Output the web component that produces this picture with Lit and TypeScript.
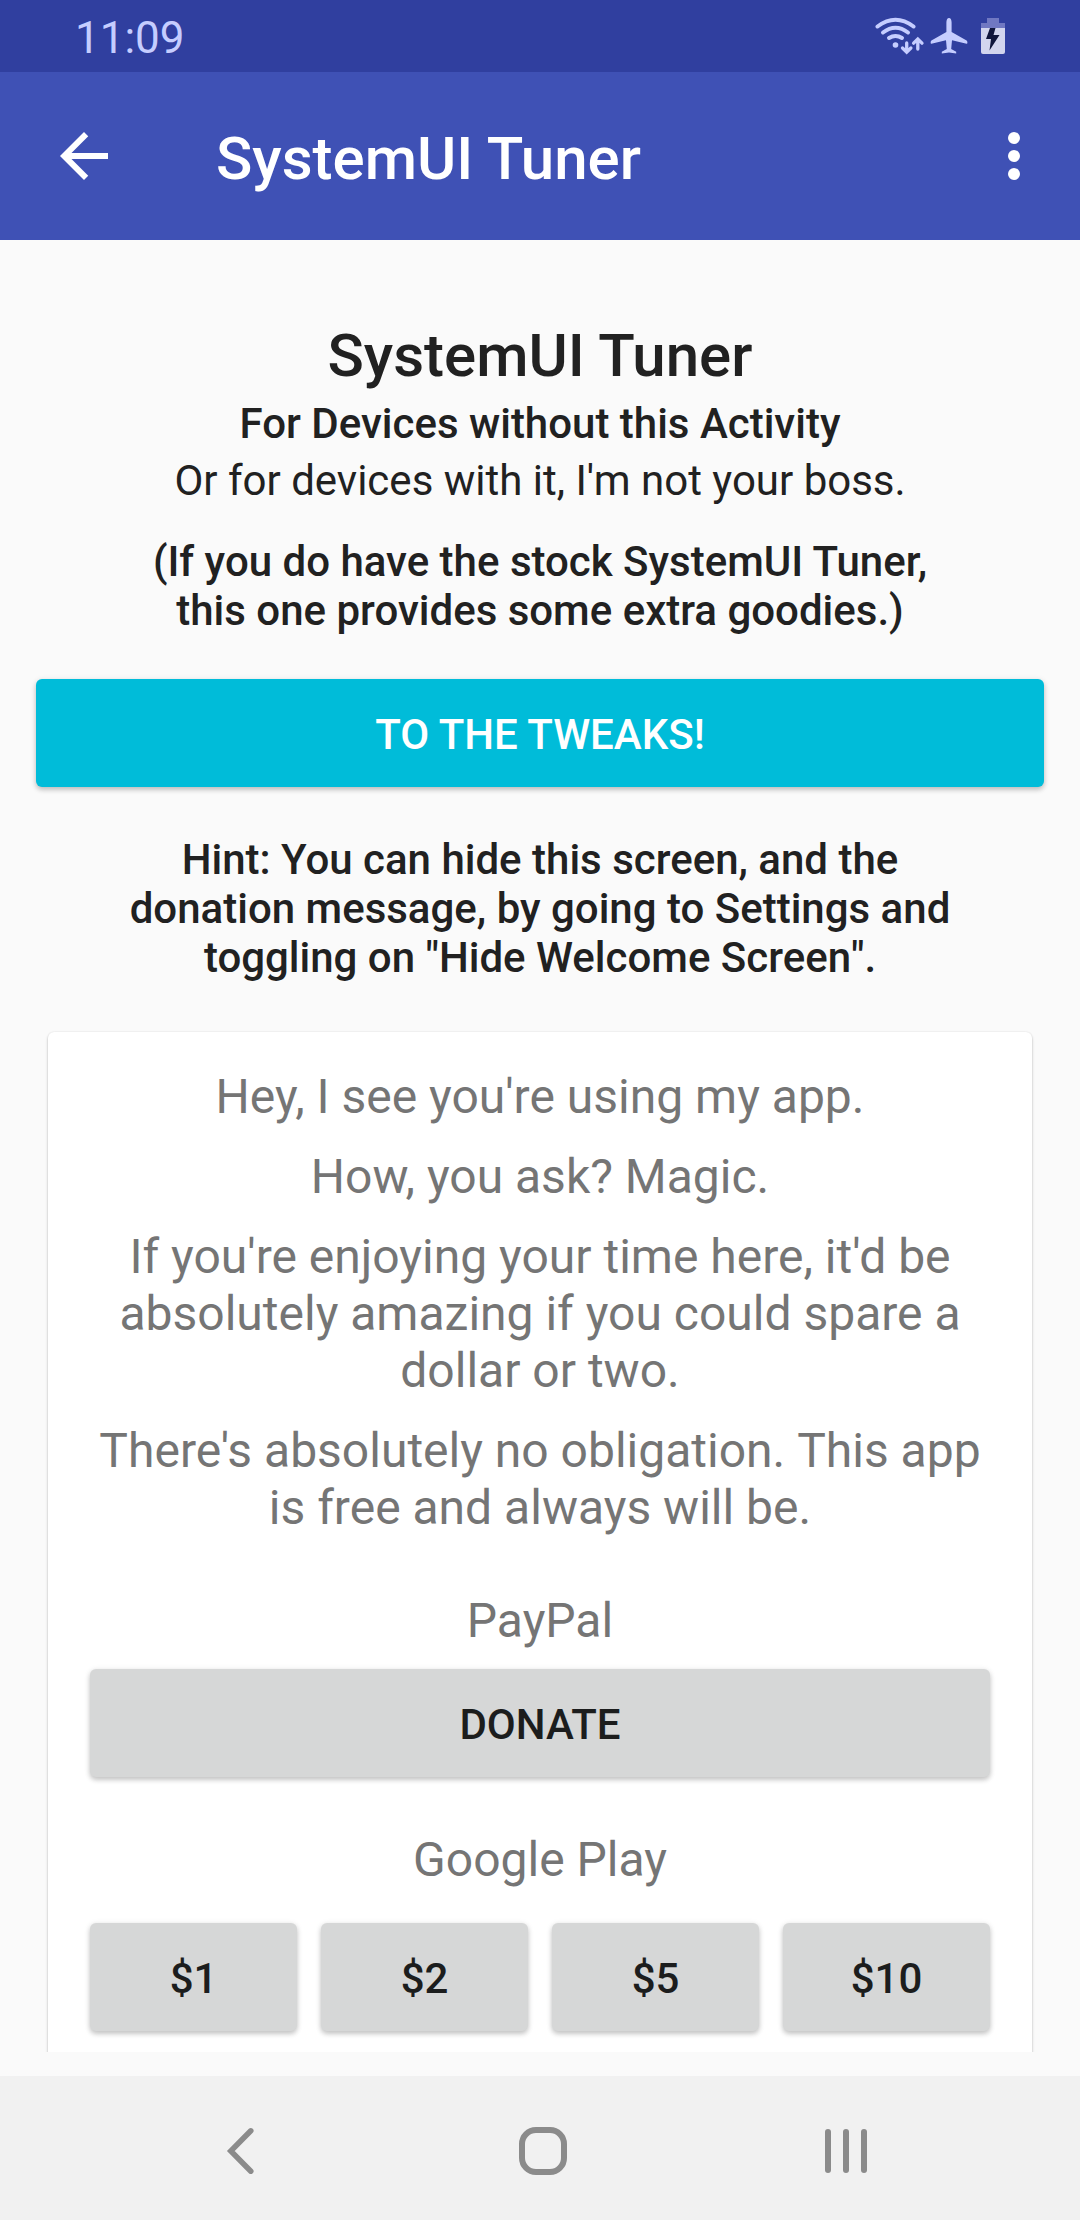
import { LitElement, html, css } from "lit";
import { customElement } from "lit/decorators.js";

@customElement("app-root")
export class AppRoot extends LitElement {
  static styles = css`
    :host {
      display: flex;
      flex-direction: column;
      width: 1080px;
      height: 2220px;
      overflow: hidden;
      background: #fafafa;
      color: #212121;
      font-family: Roboto, "Liberation Sans", sans-serif;
      font-size: 42px;
      line-height: 49px;
    }
    * {
      box-sizing: border-box;
    }
    svg {
      display: block;
      flex: none;
    }
    p,
    h1,
    h2 {
      margin: 0;
      font-weight: 400;
      font-size: inherit;
    }
    button {
      margin: 0;
      border: 0;
      font: 500 42px/49px Roboto, "Liberation Sans", sans-serif;
      border-radius: 6px;
      height: 108px;
      padding: 2px 0 0;
      color: #1c1d1d;
      background: #d6d7d7;
      box-shadow: 0 3px 5px rgba(0, 0, 0, 0.18), 0 1px 6px rgba(0, 0, 0, 0.1);
    }
    .status {
      flex: none;
      height: 72px;
      background: #303f9f;
      display: flex;
      align-items: center;
      justify-content: space-between;
      padding: 0 74px 0 75px;
      color: #c5cdff;
      font-size: 44px;
    }
    .time {
      padding-top: 4px;
    }
    .bar {
      flex: none;
      height: 168px;
      background: #3f51b5;
      display: flex;
      align-items: center;
      padding: 0 30px 0 48px;
    }
    .title {
      flex: 1;
      margin-left: 96px;
      padding-top: 5px;
      color: #fff;
      font-size: 60px;
      line-height: 70px;
      font-weight: 500;
    }
    .content {
      flex: none;
      height: 1812px;
      padding: 81px 36px 0;
      overflow: hidden;
      display: flex;
      flex-direction: column;
      text-align: center;
    }
    .heading {
      font-size: 60px;
      line-height: 70px;
      font-weight: 500;
    }
    .strong {
      font-weight: 500;
    }
    .sub {
      margin-top: 8px;
    }
    .plain {
      margin-top: 8px;
    }
    .note {
      margin-top: 32px;
    }
    .unkerned {
      font-kerning: none;
    }
    .go {
      flex: none;
      margin-top: 44px;
      background: #00bcd9;
      color: #fff;
    }
    .hint {
      margin-top: 48px;
    }
    .card {
      flex: none;
      height: 1200px;
      margin: 50px 12px 0;
      padding: 36px 42px;
      border-radius: 6px;
      background: #fff;
      box-shadow: 0 2px 3px rgba(0, 0, 0, 0.22), 0 0 2px rgba(0, 0, 0, 0.12);
      color: #757575;
      font-size: 48px;
      line-height: 57px;
      display: flex;
      flex-direction: column;
    }
    .message {
      display: flex;
      flex-direction: column;
      gap: 23px;
      margin: 0 -20px;
    }
    .paypal {
      margin: 56px 0 20px;
    }
    .play {
      margin: 54px 0 35px;
    }
    .amounts {
      display: grid;
      grid-template-columns: repeat(4, 1fr);
      gap: 24px;
    }
    .nav {
      flex: none;
      margin-top: 24px;
      height: 144px;
      background: #f1f1f1;
      display: flex;
      align-items: center;
      justify-content: space-between;
      padding: 6px 206px 0 212px;
    }
  `;

  render() {
    return html`
      <header class="status">
        <span class="time">11:09</span>
        <svg width="132" height="40" viewBox="874 16 132 40">
          <g fill="none" stroke="#c5cdff" stroke-width="4" stroke-linecap="round">
            <path d="M877.500 26.500Q895.500 13 913.500 26.500" />
            <path d="M883 32.500Q895.500 23 908 32.500" />
            <path d="M889 38Q895.500 34 902 38" />
            <path stroke-width="3.300" d="M906.700 43v9M902.500 48l4.200 4.200 4.200-4.200M917.800 49V40M913.600 43.200l4.200-4.200 4.200 4.200" />
          </g>
          <circle cx="895.500" cy="45" r="2.800" fill="#c5cdff" />
          <path fill="#c5cdff" d="M949 18c-1.700 0-2.600 2-2.600 4.500V32l-15 8.500c-1 .7-1 3.500 0 3.300l14.600-3.500.8 8.700-5 2.700v1.800l7.200-1 7.200 1v-1.800l-5-2.700.8-8.700 14.600 3.500c1.200.2 1-2.600 0-3.300l-15-8.500v-9.500c0-2.500-.9-4.500-2.600-4.500z" />
          <path fill="#7078c2" d="M987 18h12v5h6v5h-24v-5h6z" />
          <path fill="#d2d5ee" d="M981 28h24v24q0 2-2 2h-20q-2 0-2-2z" />
          <path fill="#10163c" d="M990 28h5.500l-2 7h6L989.500 50.500l1.500-11.500H986z" />
        </svg>
      </header>
      <nav class="bar">
        <svg width="72" height="72" viewBox="0 0 24 24" fill="#fff">
          <path d="M20 11H7.830l5.590-5.590L12 4l-8 8 8 8 1.410-1.410L7.830 13H20v-2z" />
        </svg>
        <span class="title">SystemUI Tuner</span>
        <svg width="72" height="72" viewBox="0 0 24 24" fill="#fff">
          <circle cx="12" cy="6" r="2" />
          <circle cx="12" cy="12" r="2" />
          <circle cx="12" cy="18" r="2" />
        </svg>
      </nav>
      <main class="content">
        <h1 class="heading">SystemUI Tuner</h1>
        <h2 class="strong sub">For Devices without this Activity</h2>
        <p class="plain">Or for devices with it, I'm not your boss.</p>
        <p class="strong note">
          (If you do have the stock SystemUI Tuner,<br />this one provides some extra goodies<span class="unkerned">.)</span>
        </p>
        <button class="go">TO THE TWEAKS!</button>
        <p class="strong hint">
          Hint: You can hide this screen, and the<br />donation message, by going to Settings and<br />toggling
          on "Hide Welcome Screen<span class="unkerned">".</span>
        </p>
        <section class="card">
          <div class="message">
            <p>Hey, I see you're using my app.</p>
            <p>How, you ask? Magic.</p>
            <p>If you're enjoying your time here, it'd be<br />absolutely amazing if you could spare a<br />dollar or two.</p>
            <p>There's absolutely no obligation<span class="unkerned">. T</span>his app<br />is free and always will be.</p>
          </div>
          <p class="paypal">PayPal</p>
          <button>DONATE</button>
          <p class="play">Google Play</p>
          <div class="amounts">
            ${["$1", "$2", "$5", "$10"].map((amount) => html`<button>${amount}</button>`)}
          </div>
        </section>
      </main>
      <footer class="nav">
        <svg width="54" height="54" viewBox="0 0 54 54" fill="none" stroke="#8b8b8b" stroke-width="5.500" stroke-linecap="round">
          <path d="M38.800 6.800L18.800 27l20 20.200" />
        </svg>
        <svg width="54" height="54" viewBox="0 0 54 54" fill="none" stroke="#8b8b8b" stroke-width="6">
          <rect x="6" y="6" width="42" height="42" rx="14" />
        </svg>
        <svg width="54" height="54" viewBox="0 0 54 54" fill="#8b8b8b">
          <rect x="5" y="5" width="6" height="44" rx="3" />
          <rect x="23" y="5" width="6" height="44" rx="3" />
          <rect x="41" y="5" width="6" height="44" rx="3" />
        </svg>
      </footer>
    `;
  }
}
